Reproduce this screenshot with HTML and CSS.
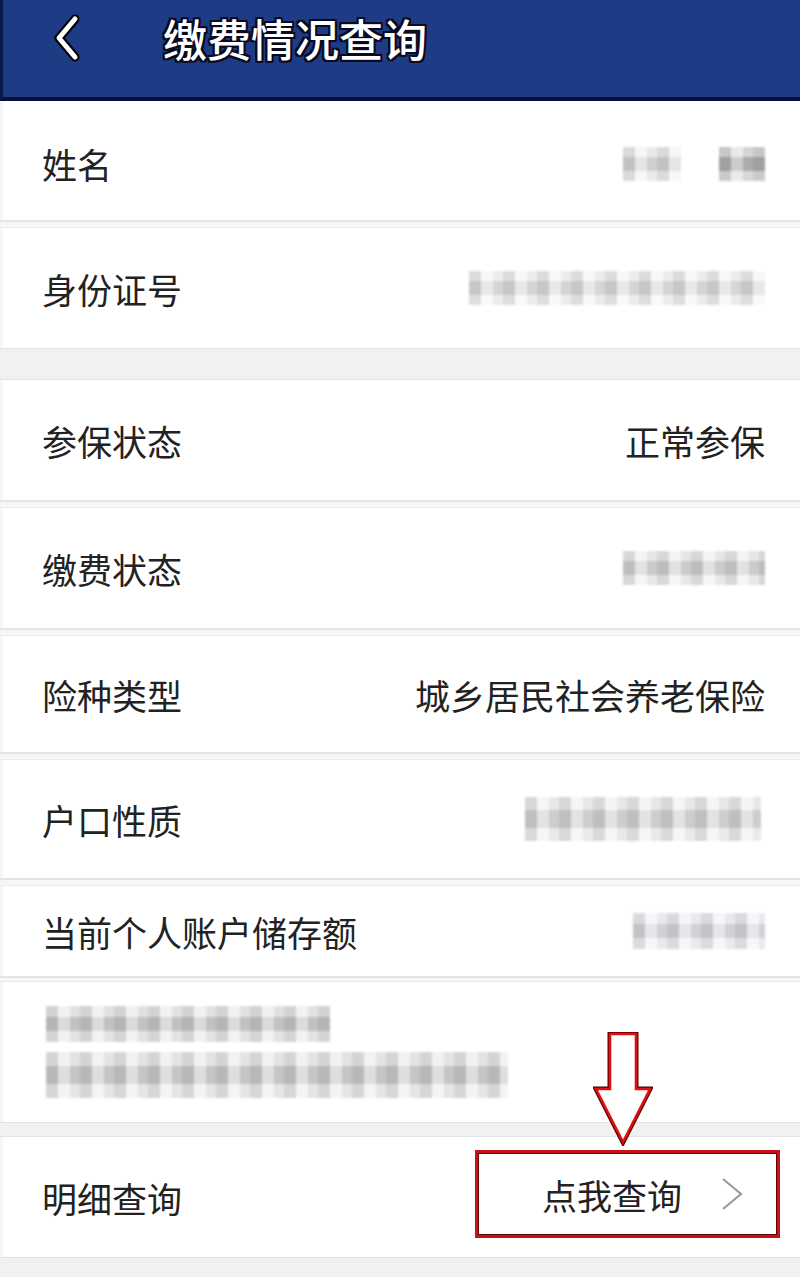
FILE: index.html
```html
<!DOCTYPE html>
<html lang="zh-CN">
<head>
<meta charset="utf-8">
<title>缴费情况查询</title>
<link rel="stylesheet" href="styles.css">
</head>
<body>
<div class="page">
  <header class="topbar">
    <svg class="back" viewBox="0 0 40 50" width="40" height="50" aria-hidden="true">
      <polyline points="28,6 12,25 28,44" fill="none" stroke="#000" stroke-width="9" stroke-linecap="round" stroke-linejoin="round"/>
      <polyline points="28,6 12,25 28,44" fill="none" stroke="#fff" stroke-width="5" stroke-linecap="round" stroke-linejoin="round"/>
    </svg>
    <h1 class="title">缴费情况查询</h1>
  </header>

  <div class="row r1">
    <span class="label">姓名</span>
    <span class="value">
      <span class="mosaic m-name1"></span>
      <span class="mosaic m-name2"></span>
    </span>
  </div>
  <div class="sep"></div>
  <div class="row r2">
    <span class="label">身份证号</span>
    <span class="value"><span class="mosaic m-id"></span></span>
  </div>
  <div class="band"></div>
  <div class="row">
    <span class="label">参保状态</span>
    <span class="value">正常参保</span>
  </div>
  <div class="sep"></div>
  <div class="row">
    <span class="label">缴费状态</span>
    <span class="value"><span class="mosaic m-pay"></span></span>
  </div>
  <div class="sep"></div>
  <div class="row r5">
    <span class="label">险种类型</span>
    <span class="value">城乡居民社会养老保险</span>
  </div>
  <div class="sep"></div>
  <div class="row r6">
    <span class="label">户口性质</span>
    <span class="value"><span class="mosaic m-hukou"></span></span>
  </div>
  <div class="sep"></div>
  <div class="row r7">
    <span class="label">当前个人账户储存额</span>
    <span class="value"><span class="mosaic m-amount"></span></span>
  </div>
  <div class="sep thin"></div>

  <div class="tail">
    <div class="note">
      <span class="mosaic m-line1"></span>
      <span class="mosaic m-line2"></span>
    </div>
    <div class="band small"></div>
    <div class="row r9">
      <span class="label">明细查询</span>
      <a class="query-box" href="#">
        <span class="query-text">点我查询</span>
        <svg class="chev" viewBox="0 0 24 34" width="24" height="34" aria-hidden="true">
          <polyline points="3,2 21,17 3,32" fill="none" stroke="#9a9a9a" stroke-width="2.2"/>
        </svg>
      </a>
    </div>
    <div class="band bottom"></div>

    <svg class="arrow" viewBox="0 0 60 114" width="60" height="114" aria-hidden="true">
      <path d="M17,2 L43,2 L43,57 L57,57 L30,110 L3,57 L17,57 Z" fill="#fff" stroke="#5a0000" stroke-width="5" stroke-linejoin="miter"/>
      <path d="M17,2 L43,2 L43,57 L57,57 L30,110 L3,57 L17,57 Z" fill="#fff" stroke="#e01010" stroke-width="2.6" stroke-linejoin="miter"/>
    </svg>
  </div>
</div>
</body>
</html>
```

FILE: styles.css
```css
* { box-sizing: border-box; }

html, body {
  margin: 0;
  padding: 0;
  background: #ffffff;
}

body {
  font-family: "Noto Sans CJK SC", "Noto Sans", sans-serif;
  color: #222222;
}

.page {
  width: 800px;
  overflow: hidden;
}

.topbar {
  height: 101px;
  background: #1d3c85;
  border-left: 3px solid #0a1a4a;
  border-bottom: 4px solid #08103a;
  display: flex;
  align-items: center;
  padding-left: 44px;
  padding-bottom: 22px;
}

.back {
  display: block;
  flex: none;
}

.title {
  margin: 0 0 0 76px;
  font-size: 44px;
  font-weight: 500;
  color: #ffffff;
  letter-spacing: 0;
  line-height: 1;
  text-shadow:
    2px 0 0 #0a0a20, -2px 0 0 #0a0a20, 0 2px 0 #0a0a20, 0 -2px 0 #0a0a20,
    2px 2px 0 #0a0a20, -2px -2px 0 #0a0a20, 2px -2px 0 #0a0a20, -2px 2px 0 #0a0a20;
}

.row {
  height: 120px;
  display: flex;
  align-items: center;
  justify-content: space-between;
  padding: 0 35px 0 42px;
  font-size: 35px;
  font-weight: 400;
  line-height: 1;
  border-left: 3px solid #f6f6f6;
}

.row.r1 { height: 119px; padding-top: 6px; }
.row.r5 { height: 116px; }
.row.r6 { height: 118px; }
.row.r7 { height: 90px; }

.label {
  color: #222222;
  margin-left: -3px;
}

.value {
  color: #222222;
  display: flex;
  align-items: center;
}

.sep {
  height: 8px;
  background: #f6f6f6;
  border-top: 2px solid #e4e4e4;
  border-bottom: 1px solid #ececec;
}

.sep.thin { height: 6px; }

.band {
  height: 32px;
  background: #f1f1f1;
  border-top: 1px solid #e2e2e2;
  border-bottom: 1px solid #e2e2e2;
}

.band.small { height: 15px; }
.band.bottom { height: 20px; border-bottom: 0; }

/* pixelated (mosaic) private data */
.mosaic {
  display: block;
  background-color: #e6e6e6;
  background-image:
    repeating-linear-gradient(90deg, rgba(0,0,0,0.10) 0 12px, rgba(255,255,255,0.35) 12px 24px, rgba(0,0,0,0.04) 24px 34px),
    linear-gradient(180deg, rgba(255,255,255,0.5) 0 30%, rgba(0,0,0,0.06) 30% 70%, rgba(255,255,255,0.55) 70% 100%);
  filter: blur(1.2px);
}

.m-name1 { width: 58px; height: 34px; margin-right: 38px; }
.m-name2 { width: 46px; height: 34px; background-color: #bdbdbd; }
.m-id { width: 296px; height: 34px; background-color: #ececec; }
.m-pay { width: 142px; height: 34px; background-color: #e0e0e0; }
.m-hukou { width: 236px; height: 44px; background-color: #e2e2e2; margin-right: 4px; }
.m-amount { width: 132px; height: 36px; background-color: #e6e6ee; }

.tail {
  position: relative;
}

.note {
  height: 140px;
  padding: 24px 0 0 43px;
  display: flex;
  flex-direction: column;
  gap: 10px;
  border-left: 3px solid #f6f6f6;
}

.m-line1 { width: 284px; height: 36px; background-color: #d6d6d6; }
.m-line2 { width: 462px; height: 46px; background-color: #dadada; }

.row.r9 {
  padding-right: 20px;
}

.query-box {
  width: 305px;
  height: 88px;
  margin-top: 13px;
  margin-bottom: 19px;
  border: 3px solid #c8111a;
  box-shadow: 0 0 0 1px #6a0000 inset;
  display: flex;
  align-items: center;
  justify-content: flex-end;
  padding-right: 33px;
  text-decoration: none;
  color: #222222;
  font-size: 35px;
}

.query-text {
  margin-right: 38px;
}

.chev { display: block; }

.arrow {
  position: absolute;
  left: 593px;
  top: 50px;
  display: block;
}
```
